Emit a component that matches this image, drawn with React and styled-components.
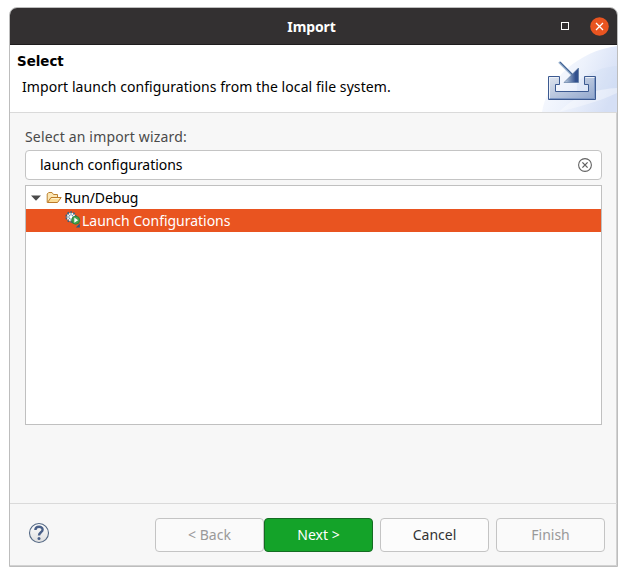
import React from 'react';
import styled, { createGlobalStyle } from 'styled-components';

const GlobalStyle = createGlobalStyle`
  * { box-sizing: border-box; }
  body {
    margin: 0;
    background: #fff;
    font-family: "Noto Sans", "Open Sans", sans-serif;
    font-size: 14px;
    color: #000;
  }
`;

const Desktop = styled.div`
  width: 627px;
  height: 576px;
  padding: 7px 9px 9px;
  overflow: hidden;
`;

const Window = styled.div`
  width: 609px;
  height: 560px;
  display: flex;
  flex-direction: column;
  border: 1px solid #bdbdbd;
  border-radius: 8px 8px 0 0;
  background: #f7f7f7;
  overflow: hidden;
  box-shadow: inset -1px -1px 0 #d2d2d2;
`;

const TitleBar = styled.header`
  height: 37px;
  flex: none;
  display: grid;
  grid-template-columns: 88px 1fr 92px;
  align-items: center;
  background: #333031;
  border-bottom: 1px solid #1e1c1d;
  color: #fff;
`;

const Label = styled.span`
  display: inline-block;
  white-space: nowrap;
  line-height: 20px;
  font-weight: ${(p) => (p.$bold ? 700 : 400)};
  letter-spacing: ${(p) => p.$track || 0}px;
`;

const Title = styled(Label)`
  grid-column: 2;
  justify-self: center;
  padding-top: 2px;
`;

const Heading = styled(Label)`
  font-family: "DejaVu Sans", sans-serif;
  font-size: 13.4px;
  line-height: 18px;
  padding-top: 2px;
`;

const WindowControls = styled.div`
  display: flex;
  align-items: center;
  justify-content: flex-end;
  gap: 21px;
  padding-right: 8px;
`;

const Maximize = styled.span`
  width: 8px;
  height: 8px;
  border: 1px solid #fff;
`;

const Close = styled.span`
  display: flex;
  width: 19px;
  height: 19px;
`;

const Banner = styled.section`
  height: 68px;
  flex: none;
  display: flex;
  justify-content: space-between;
  background: #fff;
  border-bottom: 1px solid #dadada;
`;

const BannerText = styled.div`
  display: flex;
  flex-direction: column;
  gap: 6px;
  padding: 6px 0 0 7px;
`;

const Description = styled(Label)`
  padding-left: 5px;
`;

const Content = styled.main`
  flex: 1;
  display: flex;
  flex-direction: column;
  padding: 14px 15px 0;
`;

const FieldLabel = styled(Label)`
  color: #4a4a4a;
  height: 23px;
`;

const SearchBox = styled.div`
  width: 577px;
  height: 30px;
  flex: none;
  display: flex;
  align-items: center;
  justify-content: space-between;
  padding: 0 9px 0 14px;
  border: 1px solid #c4c4c4;
  border-radius: 4px;
  background: #fff;
`;

const Tree = styled.div`
  width: 577px;
  height: 240px;
  margin-top: 5px;
  border: 1px solid #c0c0c0;
  background: #fff;
`;

const TreeRow = styled.div`
  height: 23px;
  display: flex;
  align-items: center;
  padding-left: ${(p) => p.$indent}px;
  background: ${(p) => (p.$selected ? '#e95420' : 'transparent')};
  color: ${(p) => (p.$selected ? '#fff' : '#000')};
`;

const Footer = styled.footer`
  height: 63px;
  flex: none;
  display: flex;
  justify-content: space-between;
  padding: 14px 12px 0 18px;
  border-top: 1px solid #dadada;
`;

const HelpIcon = styled.svg`
  margin-top: 4px;
`;

const Buttons = styled.div`
  display: flex;
  gap: 7px;
`;

const ButtonPair = styled.div`
  display: flex;
`;

const palette = {
  normal: ['#fcfcfc', '#c4c4c4', '#333'],
  disabled: ['#fafafa', '#c4c4c4', '#999'],
  primary: ['#14a329', '#146c22', '#fff'],
};

const Button = styled.button`
  width: 109px;
  height: 34px;
  padding: 0;
  border-radius: 4px;
  font: inherit;
  background: ${(p) => palette[p.$kind][0]};
  border: 1px solid ${(p) => palette[p.$kind][1]};
  color: ${(p) => palette[p.$kind][2]};
`;

function CloseIcon() {
  return (
    <svg width="19" height="19" viewBox="0 0 19 19">
      <circle cx="9.5" cy="9.5" r="9.3" fill="#e95420" />
      <path d="M6 6l7 7M13 6l-7 7" stroke="#fff" strokeWidth="1.3" />
    </svg>
  );
}

function ImportArt() {
  return (
    <svg width="76" height="67" viewBox="0 0 76 67">
      <defs>
        <linearGradient id="sky" x1="0" x2="1" y1="0.2" y2="0.6">
          <stop offset="0" stopColor="#fbfcff" />
          <stop offset="0.5" stopColor="#edf2fc" />
          <stop offset="1" stopColor="#d5dff5" />
        </linearGradient>
        <linearGradient id="tray" x1="0" x2="1" y1="0" y2="1">
          <stop offset="0" stopColor="#dfe5ef" />
          <stop offset="1" stopColor="#8fa5cc" />
        </linearGradient>
        <linearGradient id="tip" x1="0" x2="1">
          <stop offset="0.1" stopColor="#b4c6dc" />
          <stop offset="0.8" stopColor="#31508d" />
        </linearGradient>
      </defs>
      <path d="M1 67C6 34 38 6 76 1V67Z" fill="url(#sky)" />
      <path d="M36 37C48 27 62 22 76 21V43C60 44 46 48 36 53Z" fill="#c5d4f2" opacity=".22" />
      <path d="M18 67C34 50 56 44 76 43V48C60 56 40 61 18 67Z" fill="#fff" opacity=".35" />
      <path d="M18 17L32 31" stroke="#9fb6d2" strokeWidth="2.2" />
      <path d="M19 17L33 31" stroke="#426395" strokeWidth="1.1" />
      <path d="M7.5 31.5H18.5V39.5H14.5V46.5H47.5V39.5H43.5V31.5H54.5V54.5H7.5Z" fill="url(#tray)" />
      <path d="M8.5 53V32.5H17.5M44.5 32.5H53" fill="none" stroke="#edf1f8" />
      <path d="M9 53.5H53.5V33" fill="none" stroke="#7e98c5" />
      <path d="M7.5 31.5H18.5V39.5H14.5V46.5H47.5V39.5H43.5V31.5H54.5V54.5H7.5Z" fill="none" stroke="#3c5a91" />
      <path d="M37.5 23V37.5H23Z" fill="url(#tip)" stroke="#527099" strokeWidth=".6" />
    </svg>
  );
}

function ClearIcon() {
  return (
    <svg width="14" height="14" viewBox="0 0 14 14" fill="none" stroke="#626262">
      <circle cx="7" cy="7" r="6.4" strokeWidth="1.1" />
      <path d="M4.4 4.4l5.2 5.2M9.6 4.4L4.4 9.6" strokeWidth="1.3" />
    </svg>
  );
}

function Expander() {
  return (
    <svg width="10" height="6" viewBox="0 0 10 6">
      <path d="M0 .5H10L5 5.7Z" fill="#4a4a4a" />
    </svg>
  );
}

const FolderSvg = styled.svg`
  margin: 0 2px 0 5px;
`;

function FolderIcon() {
  return (
    <FolderSvg width="16" height="16" viewBox="0 0 16 16">
      <path d="M1.2 12.5V4L2.7 2.5H6L7.5 4.5H11.5V7" fill="#fbe6b4" stroke="#bc8130" />
      <path d="M1.5 12.5L5 7.5H15.2L11.5 12.5Z" fill="#fbdc96" stroke="#bc7a28" strokeLinejoin="round" />
      <path d="M5.5 8.5H13" stroke="#fff2cf" />
    </FolderSvg>
  );
}

const LaunchSvg = styled.svg`
  margin: -2px 1px 0 0;
`;

function LaunchIcon() {
  return (
    <LaunchSvg width="16" height="18" viewBox="0 0 16 18">
      <circle cx="6" cy="6" r="4.3" fill="#f1f6f7" />
      <circle cx="6" cy="6" r="4.9" fill="none" stroke="#2d668b" strokeWidth="1.5" strokeDasharray="1.9 1.2" />
      <path d="M3.2 3.2L8.8 8.8M8.8 3.2L3.2 8.8M6 2V10M2 6H10" stroke="#477d98" strokeWidth=".8" />
      <circle cx="6" cy="6" r="1.4" fill="#fff" />
      <circle cx="10.7" cy="9.2" r="4" fill="#45a450" stroke="#277a3a" strokeWidth=".8" />
      <path d="M9.3 6.6V11.8L13.1 9.2Z" fill="#fff" />
      <path d="M14.8 12.5V16.5H10.8Z" fill="#285a8b" />
    </LaunchSvg>
  );
}

function Help() {
  return (
    <HelpIcon width="22" height="22" viewBox="0 0 22 22">
      <defs>
        <linearGradient id="help" x2="0" y2="1">
          <stop stopColor="#fff" />
          <stop offset="1" stopColor="#dedede" />
        </linearGradient>
      </defs>
      <circle cx="11" cy="11" r="9.5" fill="url(#help)" stroke="#536884" strokeWidth="1.1" />
      <path d="M7.4 8C7.4 3.8 14.6 3.8 14.6 7.7C14.6 10.4 11 10.1 11 13.5" fill="none" stroke="#4a6088" strokeWidth="2.4" />
      <circle cx="11" cy="16.5" r="1.5" fill="#4a6088" />
    </HelpIcon>
  );
}

export default function App() {
  return (
    <>
      <GlobalStyle />
      <Desktop>
        <Window>
          <TitleBar>
            <Title $bold $track={-0.1}>Import</Title>
            <WindowControls>
              <Maximize />
              <Close><CloseIcon /></Close>
            </WindowControls>
          </TitleBar>
          <Banner>
            <BannerText>
              <Heading $bold>Select</Heading>
              <Description $track={0.07}>Import launch configurations from the local file system.</Description>
            </BannerText>
            <ImportArt />
          </Banner>
          <Content>
            <FieldLabel $track={0.17}>Select an import wizard:</FieldLabel>
            <SearchBox>
              <Label $track={-0.03}>launch configurations</Label>
              <ClearIcon />
            </SearchBox>
            <Tree>
              <TreeRow $indent={5}>
                <Expander />
                <FolderIcon />
                <Label $track={-0.1}>Run/Debug</Label>
              </TreeRow>
              <TreeRow $indent={39} $selected>
                <LaunchIcon />
                <Label $track={-0.03}>Launch Configurations</Label>
              </TreeRow>
            </Tree>
          </Content>
          <Footer>
            <Help />
            <Buttons>
              <ButtonPair>
                <Button $kind="disabled"><Label>&lt; Back</Label></Button>
                <Button $kind="primary"><Label>Next &gt;</Label></Button>
              </ButtonPair>
              <Button $kind="normal"><Label>Cancel</Label></Button>
              <Button $kind="disabled"><Label>Finish</Label></Button>
            </Buttons>
          </Footer>
        </Window>
      </Desktop>
    </>
  );
}
